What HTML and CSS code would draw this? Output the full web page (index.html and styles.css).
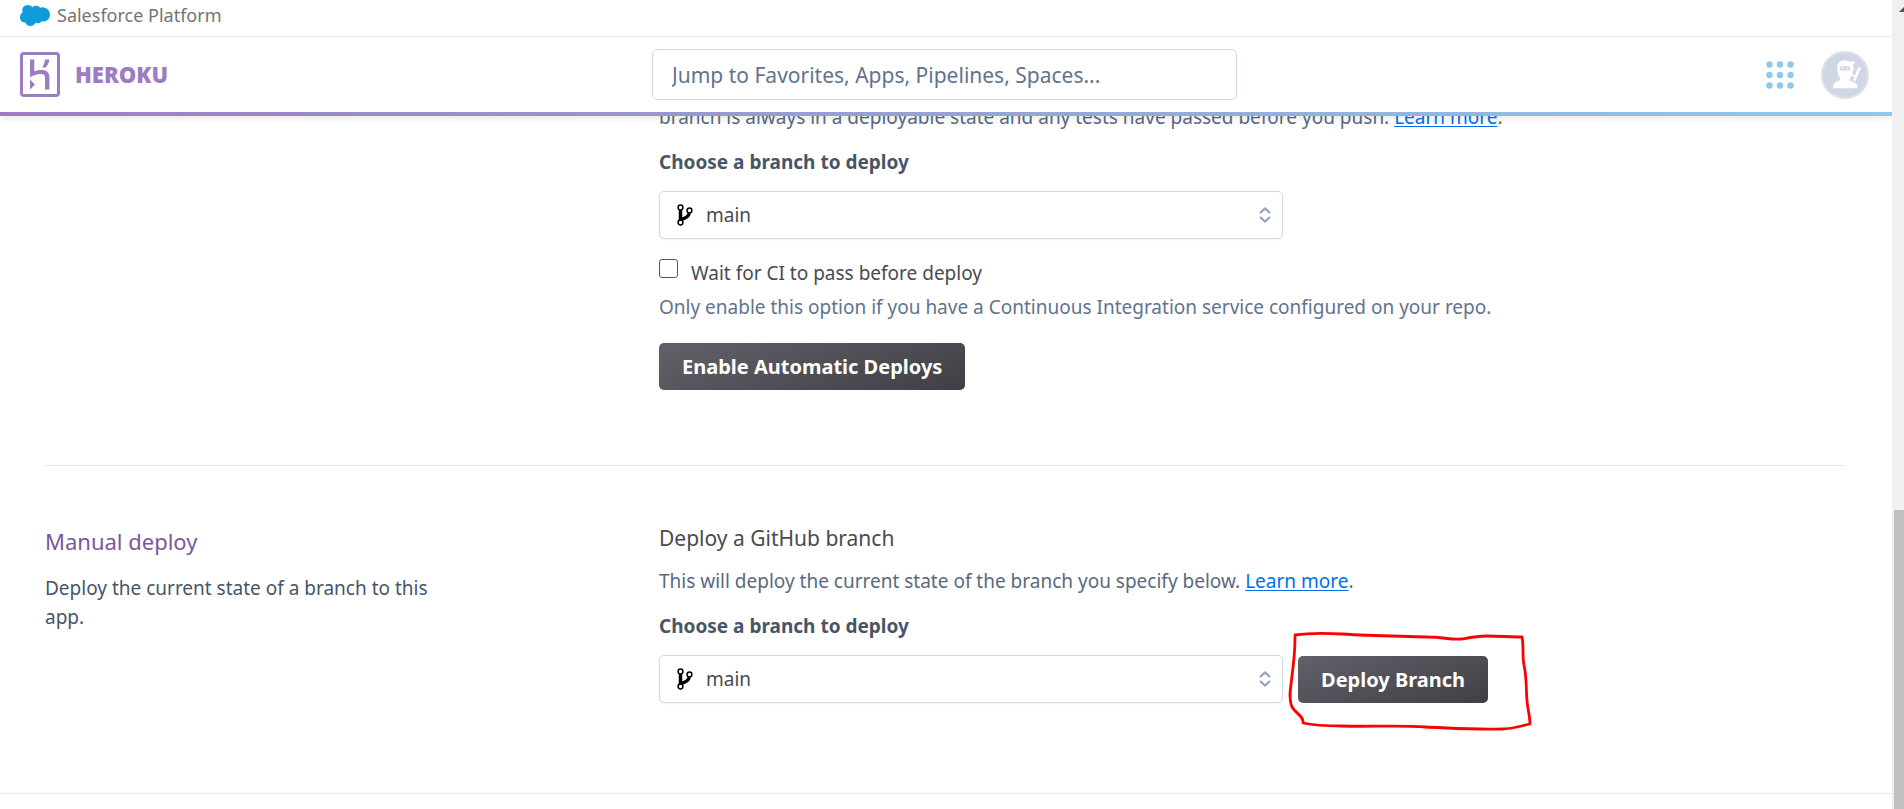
FILE: index.html
```html
<!DOCTYPE html>
<html lang="en">
<head>
<meta charset="utf-8">
<title>Deploy | Heroku</title>
<link rel="stylesheet" href="styles.css">
</head>
<body>
<div class="page">
  <header class="header">
    <div class="platform">
      <svg class="cloud" viewBox="0 0 30 21" aria-hidden="true"><path fill="#0d9dda" d="M12.500 2.300C13.600 1.200 15 .7 16.300 .8c1.800 0 3 .9 3.800 2.100 1-.5 2-.6 3.200-.5 3.900.3 6.700 3.500 6.700 7 0 4-3.200 7.100-6.900 7-.8 0-1.200-.1-1.700-.2-.9 1.600-2.500 2.400-4.200 2.100-.6 0-1.200-.2-1.700-.5-1.200 2.200-2.800 3.200-5 3.200-2.500 0-4.300-1.400-5.100-3.600C2.200 18 0 15.500 0 12.300c0-2.200 1-4 2.700-5.100-.4-.9-.5-1.800-.4-2.800C2.600 1.900 4.800.1 7.400 0c2.100 0 3.900.8 5.100 2.300z"/></svg>
      <span>Salesforce Platform</span>
    </div>
    <div class="nav">
      <a class="brand" href="#">
        <svg class="mark" viewBox="0 0 40 45" aria-hidden="true">
          <rect x="1.500" y="1.500" width="37" height="42" rx="2.500" fill="none" stroke="#9e7cc1" stroke-width="3"/>
          <path fill="#9e7cc1" d="M10 7.500h4.300v11.800c2.300-.8 4.800-1.300 7.300-1.300 4.500 0 7.800 2.500 7.800 7.200V37.500H25V25.300c0-2.300-1.400-3.200-3.900-3.200-4 0-8.300 1.900-8.500 2L10 25.300zM10 27.500l5 5-5 5zM22.200 15.500c1.500-2.300 2.500-5 2.800-8h4.400c-.4 3-1.600 5.700-3.800 8z"/>
        </svg>
        <span>HEROKU</span>
      </a>
      <input class="search" type="text" aria-label="Jump to" placeholder="Jump to Favorites, Apps, Pipelines, Spaces...">
      <div class="tools">
        <button class="icon-btn" aria-label="Applications">
          <svg class="dots" viewBox="0 0 28 28"><g fill="#8ec9ea"><circle cx="3.500" cy="3.500" r="3.200"/><circle cx="14" cy="3.500" r="3.200"/><circle cx="24.500" cy="3.500" r="3.200"/><circle cx="3.500" cy="14" r="3.200"/><circle cx="14" cy="14" r="3.200"/><circle cx="24.500" cy="14" r="3.200"/><circle cx="3.500" cy="24.500" r="3.200"/><circle cx="14" cy="24.500" r="3.200"/><circle cx="24.500" cy="24.500" r="3.200"/></g></svg>
        </button>
        <button class="icon-btn" aria-label="Account">
          <svg class="avatar" viewBox="0 0 48 48"><circle cx="24" cy="24" r="23" fill="#cfd7e6" stroke="#dfe0e3" stroke-width="2"/>
            <path fill="#fff" d="M23.500 9.500c2.600 0 4.700.6 6.200 1.600l2.600-1.300-.2 1.500 2.400-.2-2.400 2.200c.5 1.200.6 2.600.4 4.200-.4 4-1.700 7.500-3.700 10.500v1.500l3.200 1.600c3 1.200 4.500 2.400 4.500 5 0 .8-.4 1.200-1.200 1.200H13.200c-.8 0-1.200-.5-1.200-1.300 0-4 2.500-5.200 7-6.800v-1.900c-2-3-2.700-7-2.700-10.500 0-5 2.800-7.300 7.200-7.300z"/>
            <path fill="none" stroke="#fff" stroke-width="2.600" d="M38.500 16.500L33 30"/>
            <path fill="none" stroke="#fff" stroke-width="1.500" d="M31 24l5 2.200"/>
            <rect x="18.800" y="15.200" width="10.400" height="4.200" rx="1.500" fill="#cfd7e6"/>
            <path d="M20.500 16.800l2.500 1M27.500 16.800l-2.500 1" stroke="#fff" stroke-width="1.200"/>
          </svg>
        </button>
      </div>
    </div>
    <div class="stripe"></div>
  </header>

  <main class="content">
    <section class="row">
      <div class="main-col">
        <p class="desc">branch is always in a deployable state and any tests have passed before you push. <a href="#">Learn more</a>.</p>
        <label class="label" for="auto-branch">Choose a branch to deploy</label>
        <div class="controls">
          <div class="picker">
            <select class="select" id="auto-branch"><option>main</option></select>
            <svg class="fork" viewBox="0 0 16 22" aria-hidden="true"><path fill="none" stroke="#000" stroke-width="3.500" d="M3.500 6v10M3.500 15.500C9 14.500 11.500 13 12.300 9"/><g fill="#fff" stroke="#000" stroke-width="1.500"><circle cx="3.500" cy="3.500" r="2.400"/><circle cx="3.500" cy="18.500" r="2.400"/><circle cx="12.500" cy="6.500" r="2.400"/></g></svg>
            <svg class="chevrons" viewBox="0 0 12 16" aria-hidden="true"><path fill="none" stroke="#96a3b6" stroke-width="2.200" d="M1 6l5-4.500L11 6M1 10l5 4.500 5-4.500"/></svg>
          </div>
        </div>
        <div class="check">
          <input class="checkbox" type="checkbox" id="ci">
          <label for="ci">Wait for CI to pass before deploy</label>
        </div>
        <p class="hint">Only enable this option if you have a Continuous Integration service configured on your repo.</p>
        <button class="btn">Enable Automatic Deploys</button>
      </div>
    </section>

    <section class="row manual">
      <div class="side-col">
        <h2 class="title">Manual deploy</h2>
        <p class="summary">Deploy the current state of a branch to this app.</p>
      </div>
      <div class="main-col">
        <h3 class="subtitle">Deploy a GitHub branch</h3>
        <p class="desc">This will deploy the current state of the branch you specify below. <a href="#">Learn more</a>.</p>
        <label class="label" for="manual-branch">Choose a branch to deploy</label>
        <div class="controls">
          <div class="picker">
            <select class="select" id="manual-branch"><option>main</option></select>
            <svg class="fork" viewBox="0 0 16 22" aria-hidden="true"><path fill="none" stroke="#000" stroke-width="3.500" d="M3.500 6v10M3.500 15.500C9 14.500 11.500 13 12.300 9"/><g fill="#fff" stroke="#000" stroke-width="1.500"><circle cx="3.500" cy="3.500" r="2.400"/><circle cx="3.500" cy="18.500" r="2.400"/><circle cx="12.500" cy="6.500" r="2.400"/></g></svg>
            <svg class="chevrons" viewBox="0 0 12 16" aria-hidden="true"><path fill="none" stroke="#96a3b6" stroke-width="2.200" d="M1 6l5-4.500L11 6M1 10l5 4.500 5-4.500"/></svg>
          </div>
          <div class="marked">
            <button class="btn">Deploy Branch</button>
            <svg class="scribble" viewBox="0 0 246 102" aria-hidden="true"><path fill="none" stroke="#f00" stroke-width="2.800" stroke-linejoin="round" stroke-linecap="round" d="M7 4C20 2 38 2 54 3C85 5 110 5 140 6C155 6 162 9 174 8C184 6 188 5 199 5C212 5 222 6 234 6C236 16 234 23 236 34C239 48 238 60 239 70C240 80 242 86 242 93C232 95 225 98 214 98C190 99 162 97 138 96C110 94 80 96 54 95C40 95 28 95 15 92C16 85 8 83 4 76C0 67 3 55 4 45C6 30 7 18 7 6"/></svg>
          </div>
        </div>
      </div>
    </section>
  </main>
  <footer class="footer"></footer>
</div>
<div class="scrollbar" aria-hidden="true">
  <svg class="arrow" viewBox="0 0 5 5"><path d="M5 0v5H0z" fill="#505050"/></svg>
  <div class="thumb"></div>
</div>
</body>
</html>
```
FILE: styles.css
```css
* { box-sizing: border-box; }
body {
  margin: 0;
  height: 100vh;
  display: flex;
  overflow: hidden;
  background: #fff;
  color: #475569;
  font: 19px/29px "Noto Sans", "Open Sans", sans-serif;
}
h2, h3, p { margin: 0; font-weight: 400; }
button, input, select { font-family: inherit; }
a { color: #0070e8; text-underline-offset: 2px; }

.page { flex: 1; min-width: 0; display: flex; flex-direction: column; overflow: hidden; }

.header { position: relative; z-index: 1; flex: none; background: #fff; box-shadow: 0 2px 8px rgba(0, 0, 0, .1); }
.platform {
  display: flex;
  align-items: center;
  gap: 7px;
  height: 37px;
  padding: 0 20px 5px;
  border-bottom: 1px solid #e6ebf2;
  color: #747474;
  font-size: 18px;
}
.cloud { width: 30px; height: 21px; }
.nav {
  display: grid;
  grid-template-columns: 1fr 585px 1fr;
  align-items: center;
  height: 75px;
  padding: 0 23px 0 20px;
}
.brand { display: flex; align-items: center; gap: 15px; color: #9e7cc1; font-size: 22px; font-weight: 900; text-decoration: none; }
.mark { width: 40px; height: 45px; }
.search {
  width: 100%;
  height: 51px;
  padding: 0 19px;
  border: 1px solid #cfd7e6;
  border-radius: 5px;
  color: #62738d;
  font-size: 21px;
}
.search::placeholder { color: #62738d; opacity: 1; }
.tools { display: flex; justify-content: flex-end; align-items: center; gap: 27px; }
.icon-btn { display: flex; padding: 0; border: 0; background: none; }
.dots { width: 28px; height: 28px; }
.avatar { width: 48px; height: 48px; }
.stripe { height: 4px; background: linear-gradient(90deg, #9e7cc1, #8ec9ea); }

.content { margin-top: -13px; padding: 0 47px 0 45px; }
.row { display: grid; grid-template-columns: 614px 1fr; padding-bottom: 75px; }
.main-col { grid-column: 2; }
.manual { padding: 58px 0 90px; border-top: 1px solid #e8e8f1; }
.desc { color: #596981; }
.label { display: block; margin: 16px 0 14px; font-weight: 700; }
.controls { display: flex; align-items: center; gap: 15px; }
.picker { position: relative; flex: 0 1 624px; }
.select {
  display: block;
  width: 100%;
  height: 48px;
  padding: 0 40px 0 46px;
  appearance: none;
  border: 1px solid #cfd7e6;
  border-radius: 5px;
  background: #fff;
  box-shadow: 0 1px 2px rgba(0, 0, 0, .05);
  color: #4a4a4f;
  font-size: 19px;
}
.fork { position: absolute; left: 18px; top: 13px; width: 16px; height: 22px; }
.chevrons { position: absolute; right: 12px; top: 16px; width: 12px; height: 16px; }
.check { display: flex; gap: 13px; margin-top: 20px; color: #4a4a4f; }
.checkbox { width: 19px; height: 19px; margin: 0; appearance: none; border: 1px solid #55555a; border-radius: 3px; background: #fff; }
.checkbox:checked { background: #79589f; }
.hint { margin: 5px 0 21px; color: #62738d; }
.btn {
  height: 47px;
  padding: 0 23px;
  border: 0;
  border-radius: 5px;
  background: linear-gradient(160deg, #62616a, #403f45);
  color: #fff;
  font-size: 20px;
  font-weight: 700;
  white-space: nowrap;
}
.side-col { grid-column: 1; max-width: 400px; }
.title { margin-top: 3px; color: #79589f; font-size: 22px; }
.summary { margin-top: 18px; }
.subtitle { margin-bottom: 14px; color: #4a4a4f; font-size: 21px; }
.marked { position: relative; }
.scribble { position: absolute; left: -10px; top: -25px; width: 246px; height: 102px; pointer-events: none; }
.footer { border-top: 1px solid #ececee; }

.scrollbar { position: relative; flex: none; width: 12px; padding-left: 2px; background: #f0f0f0; }
.arrow { position: absolute; right: 0; top: 7px; width: 5px; height: 5px; }
.thumb { height: 38vh; margin-top: 63vh; background: #c1c1c1; }
```
